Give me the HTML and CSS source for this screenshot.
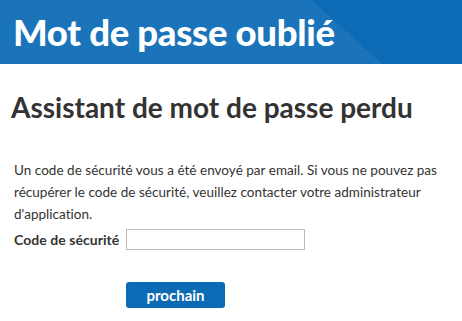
FILE: index.html
```html
<!DOCTYPE html>
<html lang="fr">
<head>
<meta charset="utf-8">
<title>Mot de passe oublié</title>
<link rel="stylesheet" href="styles.css">
</head>
<body>
<header class="banner">
  <h1 class="banner-title">Mot de passe oublié</h1>
</header>
<main class="content">
  <h2 class="wizard-title">Assistant de mot de passe perdu</h2>
  <p class="info">Un code de sécurité vous a été envoyé par email. Si vous ne pouvez pas récupérer le code de sécurité, veuillez contacter votre administrateur d'application.</p>
  <div class="field">
    <label class="field-label" for="code">Code de sécurité</label>
    <input class="field-input" id="code" type="text">
  </div>
  <div class="actions">
    <button class="btn-next" type="button">prochain</button>
  </div>
</main>
</body>
</html>
```
FILE: styles.css
```css
html, body {
  margin: 0;
  padding: 0;
  background: #fff;
}
body {
  font-family: Lato, "Noto Sans", sans-serif;
  color: #333;
}
.banner {
  height: 64px;
  background: linear-gradient(42deg, #1b74ba 256px, #0d6ab4 256px);
  display: flex;
  align-items: center;
  padding-left: 13px;
}
.banner-title {
  margin: 0;
  color: #fff;
  font-size: 36.5px;
  font-weight: 900;
  line-height: 40px;
  letter-spacing: -0.3px;
}
.content {
  padding: 0 14px;
}
.wizard-title {
  margin: 26px 0 0 -3px;
  font-size: 28px;
  font-weight: 700;
  line-height: 34px;
  color: #333;
}
.info {
  margin: 35px 0 0;
  font-size: 13.5px;
  letter-spacing: 0.03px;
  line-height: 22px;
}
.field {
  display: flex;
  align-items: center;
  margin-top: 4px;
}
.field-label {
  flex: 0 0 112px;
  white-space: nowrap;
  font-weight: 700;
  font-size: 14px;
  letter-spacing: 0.05px;
}
.field-input {
  width: 179px;
  height: 21px;
  box-sizing: border-box;
  border: 1px solid #bdbdbd;
  margin: 0;
  padding: 0 4px;
}
.actions {
  padding-left: 112px;
  margin-top: 32px;
}
.btn-next {
  width: 99px;
  height: 26px;
  border: 0;
  border-radius: 3px;
  background: #0d6ab4;
  color: #fff;
  font-family: inherit;
  font-weight: 700;
  font-size: 15px;
  padding: 0;
}
```
